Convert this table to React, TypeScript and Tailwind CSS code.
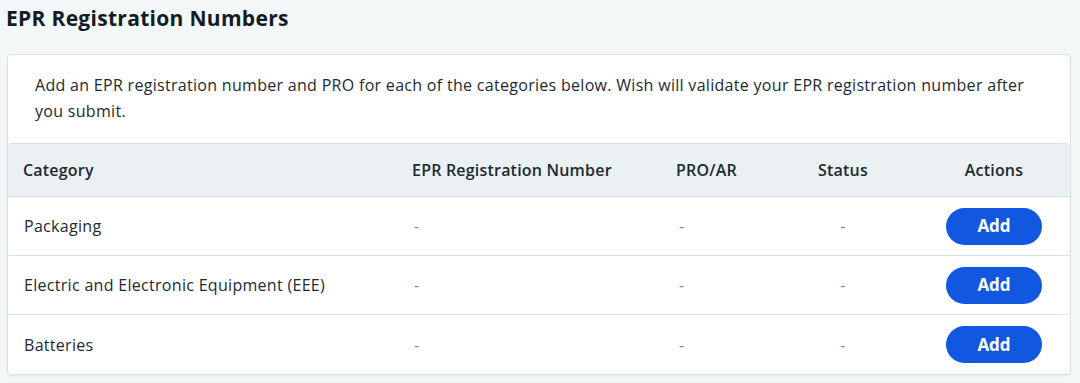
import React from 'react';

const rows = ['Packaging', 'Electric and Electronic Equipment (EEE)', 'Batteries'];

const cols = 'grid grid-cols-[389px_264px_107px_150px_152px] items-center';

const App: React.FC = () => {
  return (
    <div
      className="w-[1080px] h-[383px] bg-[#f4f7f8] text-[#1c2a33] overflow-hidden"
      style={{ fontFamily: '"Open Sans", Lato, sans-serif' }}
    >
      <h1 className="pl-[6px] pt-[4px] h-[54px] text-[21px] leading-[28px] tracking-[0.3px] font-bold text-[#111c24]">
        EPR Registration Numbers
      </h1>

      <div className="ml-[7px] w-[1064px] bg-white border border-[#d9e2e7] rounded-[4px] shadow-[0_1px_2px_rgba(0,0,0,0.06)]">
        <p className="pl-[27px] pr-[30px] pt-[17px] pb-[19px] text-[16px] leading-[26px] tracking-[0.3px] text-[#1c2a33]">
          Add an EPR registration number and PRO for each of the categories below. Wish will validate your EPR registration number after you submit.
        </p>

        <div className="border-t border-[#d9e2e7] rounded-t-[4px]">
          <div className={`${cols} h-[53px] bg-[#ebf0f3] border-b border-[#d9e2e7] text-[16px] tracking-[0.2px] font-semibold text-[#1c2a33]`}>
            <div className="pl-[15px]">Category</div>
            <div className="pl-[15px]">EPR Registration Number</div>
            <div className="pl-[15px]">PRO/AR</div>
            <div className="text-center">Status</div>
            <div className="text-center">Actions</div>
          </div>

          {rows.map((name, i) => (
            <div
              key={name}
              className={`${cols} h-[59px] text-[16px] tracking-[0.3px] ${i < rows.length - 1 ? 'border-b border-[#d9e2e7]' : ''}`}
            >
              <div className="pl-[16px]">{name}</div>
              <div className="pl-[17px] text-[#7d8a93]">-</div>
              <div className="pl-[18px] text-[#7d8a93]">-</div>
              <div className="text-center text-[#7d8a93]">-</div>
              <div className="flex justify-center">
                <button className="w-[96px] h-[37px] rounded-full bg-[#1257e0] text-white text-[17px] tracking-normal font-bold">
                  Add
                </button>
              </div>
            </div>
          ))}
        </div>
      </div>
    </div>
  );
};

export default App;
